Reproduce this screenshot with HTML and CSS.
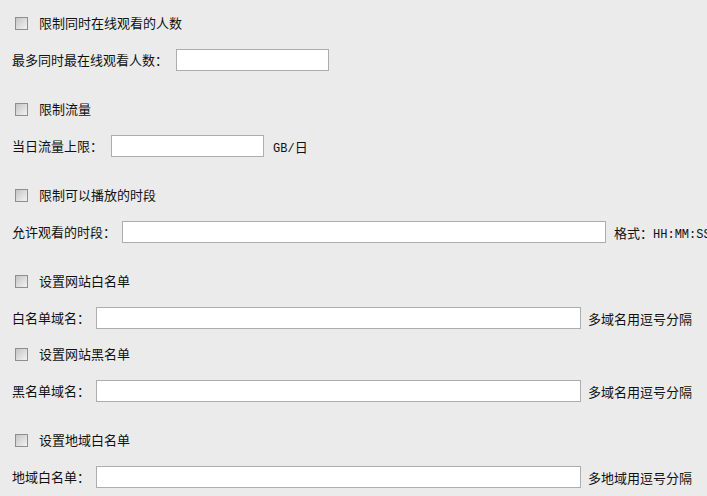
FILE: index.html
```html
<!DOCTYPE html>
<html lang="zh-CN">
<head>
<meta charset="utf-8">
<title>播放限制设置</title>
<link rel="stylesheet" href="styles.css">
</head>
<body>
<div class="page">
  <section class="section">
    <label class="check-row"><span class="box"></span><span class="check-text">限制同时在线观看的人数</span></label>
    <div class="field-row gap-8"><span class="label">最多同时最在线观看人数：</span><span class="input w-short"></span></div>
  </section>
  <section class="section">
    <label class="check-row"><span class="box"></span><span class="check-text">限制流量</span></label>
    <div class="field-row gap-8"><span class="label">当日流量上限：</span><span class="input w-short"></span><span class="hint"><span class="mono">GB/</span>日</span></div>
  </section>
  <section class="section">
    <label class="check-row"><span class="box"></span><span class="check-text">限制可以播放的时段</span></label>
    <div class="field-row gap-6 wide"><span class="label">允许观看的时段：</span><span class="input w-long"></span><span class="hint">格式：<span class="mono">HH:MM:SS</span></span></div>
  </section>
  <section class="section tight">
    <label class="check-row"><span class="box"></span><span class="check-text">设置网站白名单</span></label>
    <div class="field-row gap-6"><span class="label">白名单域名：</span><span class="input w-long"></span><span class="hint">多域名用逗号分隔</span></div>
  </section>
  <section class="section">
    <label class="check-row"><span class="box"></span><span class="check-text">设置网站黑名单</span></label>
    <div class="field-row gap-6"><span class="label">黑名单域名：</span><span class="input w-long"></span><span class="hint">多域名用逗号分隔</span></div>
  </section>
  <section class="section">
    <label class="check-row"><span class="box"></span><span class="check-text">设置地域白名单</span></label>
    <div class="field-row gap-6"><span class="label">地域白名单：</span><span class="input w-long"></span><span class="hint">多地域用逗号分隔</span></div>
  </section>
</div>
</body>
</html>
```

FILE: styles.css
```css
html, body {
  margin: 0;
  padding: 0;
  background: #ebebeb;
}
body {
  font-family: "Noto Sans CJK SC", "Noto Sans", sans-serif;
  font-size: 13px;
  color: #111;
  overflow: hidden;
  white-space: nowrap;
}
.page {
  padding: 11px 0 0 12px;
}
.section {
  margin-bottom: 25px;
}
.section.tight {
  margin-bottom: 12px;
}
.check-row {
  display: flex;
  align-items: center;
  height: 24px;
  margin-bottom: 13px;
}
.box {
  box-sizing: border-box;
  width: 13px;
  height: 13px;
  margin-left: 3px;
  margin-right: 11px;
  border: 1px solid #8e8e8e;
  background: linear-gradient(135deg, #c4c4c4 0%, #dcdcdc 50%, #f2f2f2 100%);
}
.check-text {
  line-height: 24px;
}
.field-row {
  display: flex;
  align-items: center;
  height: 24px;
}
.label {
  line-height: 24px;
}
.gap-8 .label { margin-right: 8px; }
.gap-6 .label { margin-right: 6px; }
.input {
  box-sizing: border-box;
  height: 22px;
  background: #fff;
  border: 1px solid #adadad;
  flex: none;
}
.w-short { width: 153px; }
.w-long { width: 485px; }
.wide .w-long { width: 484px; }
.hint {
  margin-left: 9px;
}
.gap-6 .hint { margin-left: 7px; }
.wide .hint { margin-left: 8px; }
.mono {
  font-family: "Liberation Mono", monospace;
  font-size: 12px;
}
```
